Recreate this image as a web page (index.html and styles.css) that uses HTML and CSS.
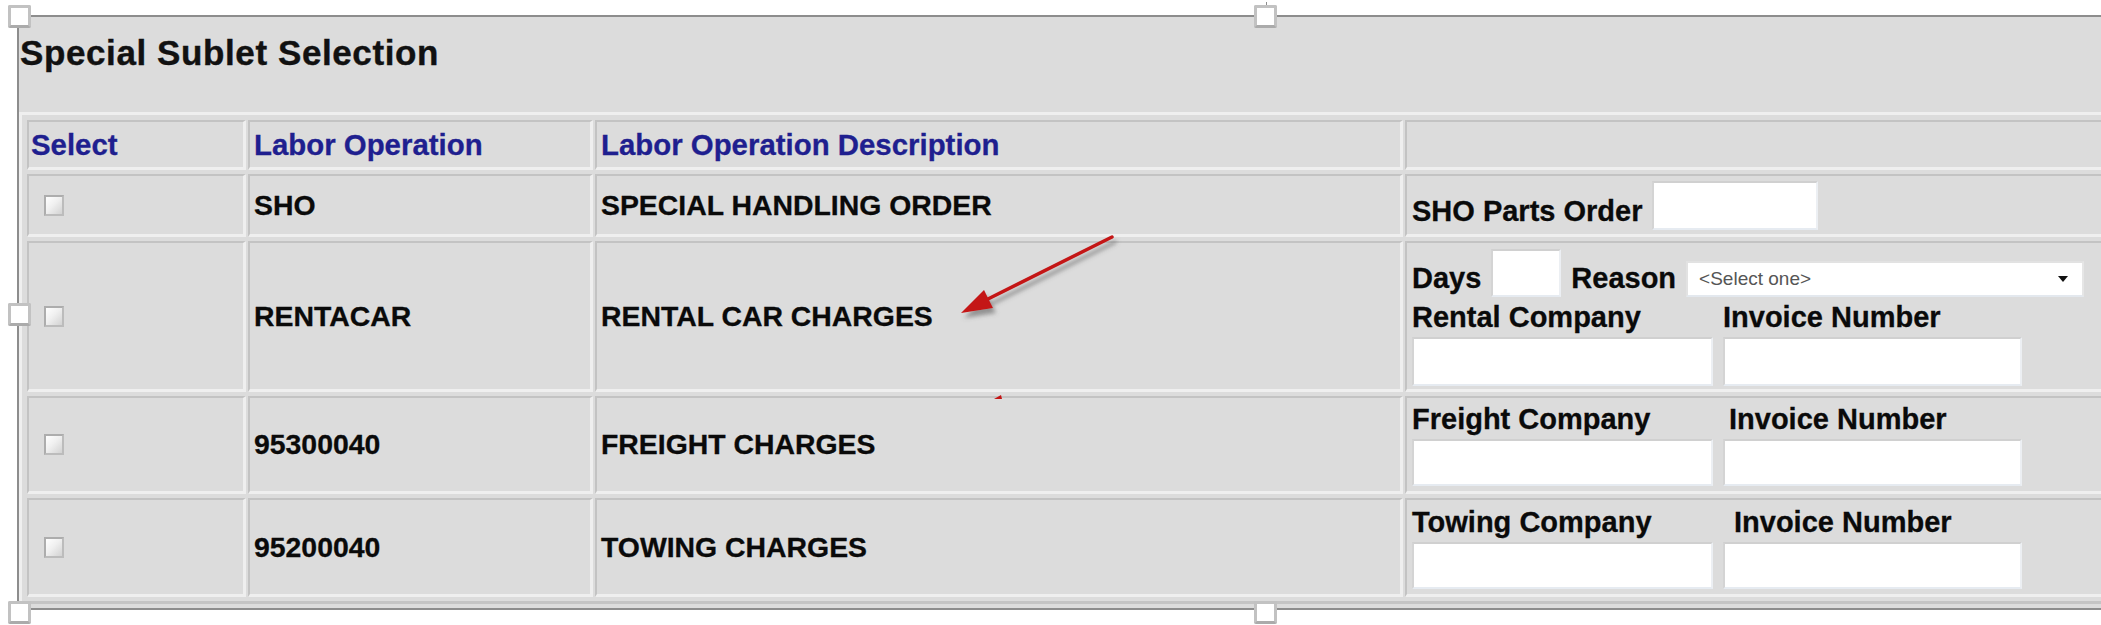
FILE: index.html
```html
<!DOCTYPE html>
<html lang="en">
<head>
<meta charset="utf-8">
<title>Special Sublet Selection</title>
<link rel="stylesheet" href="styles.css">
</head>
<body>
<div class="frame">
  <span class="stem"></span>
  <span class="handle handle-tl"></span>
  <span class="handle handle-tc"></span>
  <span class="handle handle-ml"></span>
  <span class="handle handle-bl"></span>
  <span class="handle handle-bc"></span>

  <div class="title">Special Sublet Selection</div>

  <div class="grid">
    <div class="cell head head-first">Select</div>
    <div class="cell head">Labor Operation</div>
    <div class="cell head">Labor Operation Description</div>
    <div class="cell head"></div>

    <div class="cell cell-check"><span class="checkbox"></span></div>
    <div class="cell">SHO</div>
    <div class="cell">SPECIAL HANDLING ORDER</div>
    <div class="cell extra">
      <div class="inline-row">
        <span class="lbl lbl-low">SHO Parts Order</span>
        <span class="field field-sho"></span>
      </div>
    </div>

    <div class="cell cell-check"><span class="checkbox"></span></div>
    <div class="cell">RENTACAR</div>
    <div class="cell">RENTAL CAR CHARGES</div>
    <div class="cell extra extra-top">
      <div class="inline-row">
        <span class="lbl lbl-low">Days</span>
        <span class="field field-days"></span>
        <span class="lbl lbl-low">Reason</span>
        <div class="select"><span class="select-text">&lt;Select one&gt;</span><span class="select-arrow"></span></div>
      </div>
      <div class="pair pair-spaced">
        <span class="lbl">Rental Company</span>
        <span class="lbl">Invoice Number</span>
        <span class="field field-wide"></span>
        <span class="field field-wide"></span>
      </div>
    </div>

    <div class="cell cell-check"><span class="checkbox"></span></div>
    <div class="cell">95300040</div>
    <div class="cell">FREIGHT CHARGES</div>
    <div class="cell extra">
      <div class="pair">
        <span class="lbl">Freight Company</span>
        <span class="lbl lbl-shift-sm">Invoice Number</span>
        <span class="field field-short"></span>
        <span class="field field-short"></span>
      </div>
    </div>

    <div class="cell cell-check"><span class="checkbox"></span></div>
    <div class="cell">95200040</div>
    <div class="cell">TOWING CHARGES</div>
    <div class="cell extra">
      <div class="pair">
        <span class="lbl">Towing Company</span>
        <span class="lbl lbl-shift-md">Invoice Number</span>
        <span class="field field-short"></span>
        <span class="field field-short"></span>
      </div>
    </div>
  </div>
</div>

<svg class="annot" width="2101" height="625" viewBox="0 0 2101 625" xmlns="http://www.w3.org/2000/svg">
  <defs>
    <filter id="shadow" filterUnits="userSpaceOnUse" x="900" y="200" width="260" height="150">
      <feDropShadow dx="3" dy="5" stdDeviation="2" flood-color="#555555" flood-opacity="0.55"/>
    </filter>
  </defs>
  <g filter="url(#shadow)">
    <line x1="1112" y1="237" x2="986" y2="300" stroke="#c41414" stroke-width="3.5" stroke-linecap="round"/>
    <polygon points="961,313 993,308 984,290" fill="#c41414"/>
  </g>
  <polygon points="994,399 1001,395 1002,399" fill="#c41414"/>
</svg>
</body>
</html>
```

FILE: styles.css
```css
html, body {
  margin: 0;
  padding: 0;
  overflow: hidden;
  background: #ffffff;
}

body {
  width: 2101px;
  height: 625px;
  position: relative;
  font-family: "Liberation Sans", Arial, sans-serif;
}

.frame {
  position: relative;
  margin: 15px 0 0 17px;
  width: 2200px;
  border: 2px solid #8d8d8d;
  border-right: none;
  padding-bottom: 4px;
  background: #dcdcdc;
}

.title {
  box-sizing: border-box;
  height: 95px;
  padding: 16px 0 0 1px;
  font-size: 35px;
  line-height: 40px;
  font-weight: bold;
  letter-spacing: 0.6px;
  color: #111111;
  -webkit-text-stroke: 0.4px #111111;
}

.grid {
  display: grid;
  grid-template-columns: 219px 345px 808px 780px;
  grid-template-rows: 50px 63px 151px 98px 99px;
  column-gap: 2px;
  row-gap: 4px;
  padding: 5px 5px 4px 5px;
  border-style: solid;
  border-width: 3px;
  border-color: #efefef #bdbdbd #c4c4c4 #efefef;
}

.cell {
  box-sizing: border-box;
  display: flex;
  align-items: center;
  padding: 0 4px;
  border-style: solid;
  border-width: 2px 3px 3px 2px;
  border-color: #c3c3c3 #efefef #efefef #c3c3c3;
  background: #dcdcdc;
  font-size: 28.4px;
  line-height: 33px;
  font-weight: bold;
  color: #0a0a0a;
  -webkit-text-stroke: 0.3px #0a0a0a;
  white-space: nowrap;
}

.head {
  font-size: 29.4px;
  color: #1f1f8f;
  -webkit-text-stroke: 0.3px #1f1f8f;
}

.head-first {
  padding-left: 2px;
}

.cell-check {
  padding-left: 15px;
}

.checkbox {
  display: block;
  box-sizing: border-box;
  width: 20px;
  height: 21px;
  border: 2px solid #adadad;
  border-right-color: #bcbcbc;
  border-bottom-color: #bcbcbc;
  background: linear-gradient(135deg, #ffffff 0%, #f0f0f0 45%, #d2d2d2 100%);
}

.extra {
  flex-direction: column;
  align-items: flex-start;
  justify-content: center;
  padding-left: 5px;
}

.extra-top {
  justify-content: flex-start;
  padding-top: 6px;
}

.inline-row {
  display: flex;
  align-items: flex-end;
  gap: 10px;
}

.lbl {
  display: block;
  font-size: 29px;
  line-height: 33px;
  font-weight: bold;
  color: #0a0a0a;
}

.lbl-low {
  margin-bottom: 2px;
}

.lbl-shift-sm {
  padding-left: 6px;
}

.lbl-shift-md {
  padding-left: 11px;
}

.field {
  display: block;
  box-sizing: border-box;
  background: #ffffff;
  border: 2px solid;
  border-color: #d0d0d0 #eceff3 #e6ebf1 #d4d4d4;
}

.field-sho {
  width: 166px;
  height: 49px;
}

.field-days {
  width: 70px;
  height: 48px;
}

.field-wide {
  height: 49px;
}

.field-short {
  height: 47px;
}

.pair {
  display: grid;
  grid-template-columns: 301px 299px;
  column-gap: 10px;
  row-gap: 3px;
}

.pair-spaced {
  margin-top: 4px;
}

.select {
  box-sizing: border-box;
  width: 398px;
  height: 36px;
  display: flex;
  align-items: center;
  padding-left: 11px;
  background: #ffffff;
  border: 2px solid;
  border-color: #e2e2e2 #e6e6e6 #e3e8ee #e2e2e2;
  -webkit-text-stroke: 0;
}

.select-text {
  font-size: 19px;
  font-weight: normal;
  color: #555555;
  line-height: 22px;
}

.select-arrow {
  margin-left: auto;
  margin-right: 14px;
  width: 0;
  height: 0;
  border-left: 5px solid transparent;
  border-right: 5px solid transparent;
  border-top: 6px solid #111111;
}

.handle {
  position: absolute;
  box-sizing: border-box;
  width: 23px;
  height: 23px;
  background: #ffffff;
  border: 3px solid #c2c2c2;
  border-bottom-color: #ababab;
  border-radius: 2px;
}

.handle-tl { left: -11px; top: -12px; }
.handle-tc { left: 1235px; top: -12px; }
.handle-ml { left: -11px; top: 286px; }
.handle-bl { left: -11px; top: 584px; }
.handle-bc { left: 1235px; top: 584px; }

.stem {
  position: absolute;
  left: 1247px;
  top: -15px;
  width: 1px;
  height: 4px;
  background: #8d8d8d;
}

.annot {
  position: absolute;
  left: 0;
  top: 0;
  pointer-events: none;
}
```
